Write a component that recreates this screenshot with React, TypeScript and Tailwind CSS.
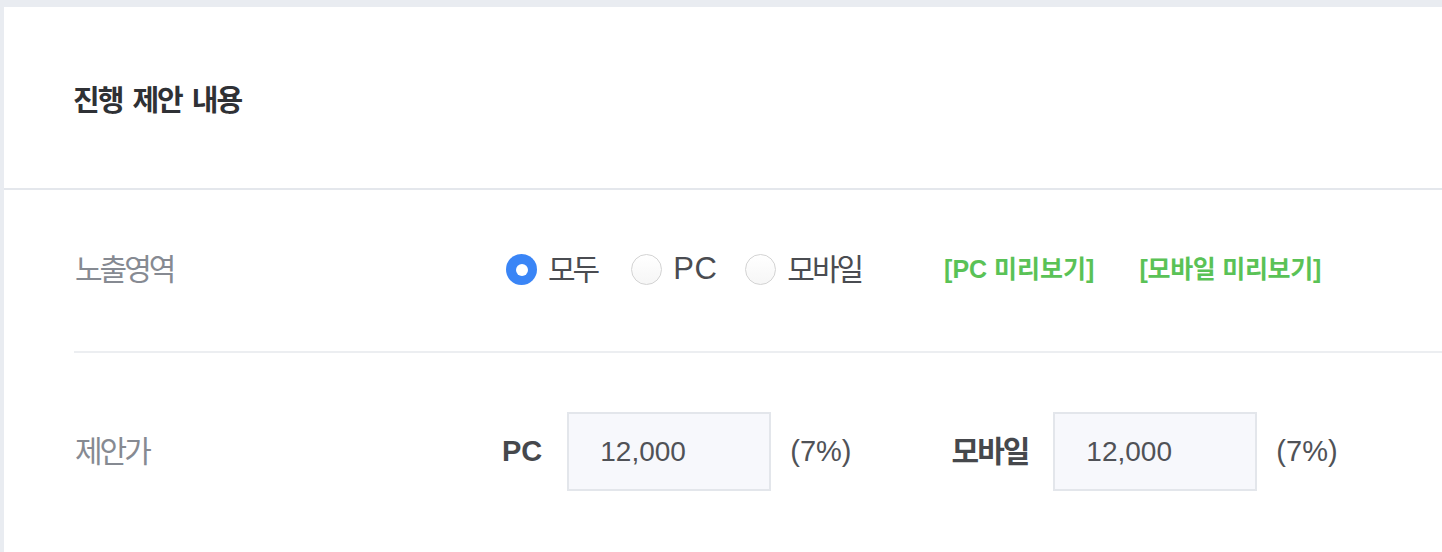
const font = { fontFamily: '"Liberation Sans", "Noto Sans CJK KR", sans-serif' };

const Radio = ({ checked, label, latin }: { checked?: boolean; label: string; latin?: boolean }) => (
  <label className="flex items-center gap-[11px]">
    <span
      className={`flex h-[31px] w-[31px] items-center justify-center rounded-full ${
        checked
          ? 'bg-[#3a85f6]'
          : 'border border-[#d3d3d3] bg-gradient-to-b from-white to-[#f6f6f6]'
      }`}
    >
      {checked && <span className="h-[12px] w-[12px] rounded-full bg-white" />}
    </span>
    <span
      className={
        latin
          ? 'text-[31px] tracking-[0.5px] text-[#4a4c51]'
          : 'text-[30px] tracking-[-3px] text-[#4a4c51]'
      }
    >
      {label}
    </span>
  </label>
);

const PriceInput = ({ value }: { value: string }) => (
  <div className="flex h-[79px] w-[204px] items-center border-2 border-[#e3e6eb] bg-[#f7f8fc] pl-[31px] text-[28px] text-[#505257]">
    {value}
  </div>
);

export default function App() {
  return (
    <div className="min-h-[552px] bg-[#e9ecf1] pl-[4px] pt-[7px]" style={font}>
      <div className="min-h-[545px] bg-white">
        <div className="flex h-[183px] items-center border-b-2 border-[#e4e7ec] pl-[69px] pt-[8px]">
          <h2 className="text-[29px] font-bold tracking-[-2px] text-[#2f3135] [word-spacing:4px]">
            진행 제안 내용
          </h2>
        </div>

        <div className="pl-[70px]">
          <div className="flex h-[163px] items-center border-b-2 border-[#eceef1] pb-[2px]">
            <div className="w-[432px] pl-px text-[30px] tracking-[-3px] text-[#868a92]">노출영역</div>
            <div className="flex items-center">
              <Radio checked label="모두" />
              <div className="ml-[34px]">
                <Radio label="PC" latin />
              </div>
              <div className="ml-[28px]">
                <Radio label="모바일" />
              </div>
              <a className="ml-[83px] text-[25px] font-bold text-[#5ac256]">[PC 미리보기]</a>
              <a className="ml-[45px] text-[25px] font-bold tracking-[-0.3px] text-[#5ac256]">
                [모바일 미리보기]
              </a>
            </div>
          </div>

          <div className="flex items-center pt-[59px]">
            <div className="w-[428px] pl-px text-[30px] tracking-[-3px] text-[#868a92]">제안가</div>
            <span className="text-[29px] font-bold text-[#46484c]">PC</span>
            <div className="ml-[25px]">
              <PriceInput value="12,000" />
            </div>
            <span className="ml-[19px] text-[29px] text-[#505257]">(7%)</span>
            <span className="ml-[100px] text-[30px] font-bold tracking-[-2px] text-[#46484c]">모바일</span>
            <div className="ml-[25px]">
              <PriceInput value="12,000" />
            </div>
            <span className="ml-[19px] text-[29px] text-[#505257]">(7%)</span>
          </div>
        </div>
      </div>
    </div>
  );
}
